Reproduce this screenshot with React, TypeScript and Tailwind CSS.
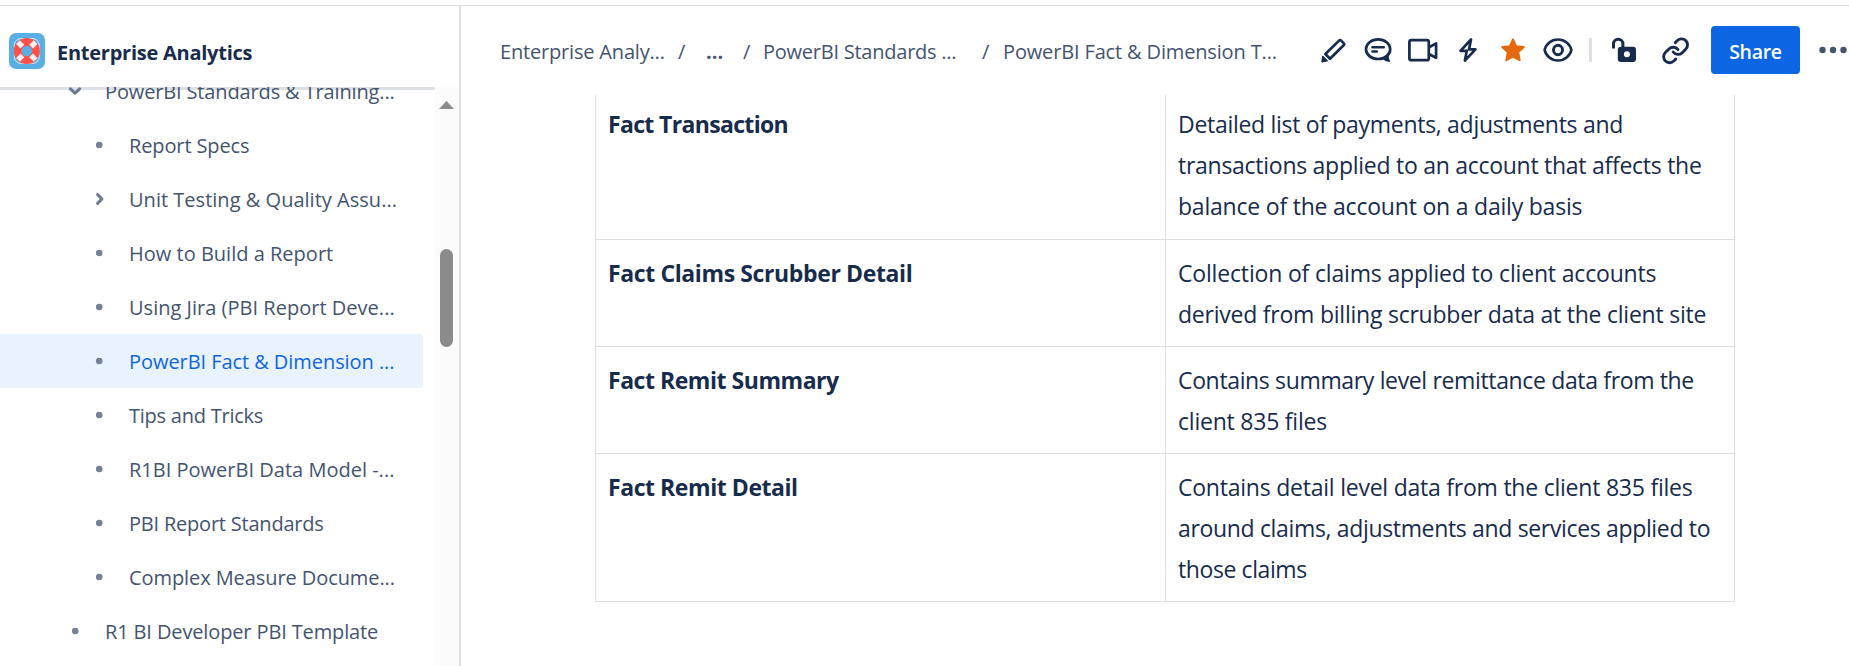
import type { ReactNode } from "react";

type TreeItem = {
  label: string;
  tracking: string;
  kind?: "bullet" | "open" | "closed";
  outer?: boolean;
  active?: boolean;
};

const tree: TreeItem[] = [
  { label: "PowerBI Standards & Training...", tracking: "tracking-[-0.14px]", kind: "open", outer: true },
  { label: "Report Specs", tracking: "tracking-[-0.12px]" },
  { label: "Unit Testing & Quality Assu...", tracking: "tracking-[0.02px]", kind: "closed" },
  { label: "How to Build a Report", tracking: "tracking-[0.01px]" },
  { label: "Using Jira (PBI Report Deve...", tracking: "tracking-[0.02px]" },
  { label: "PowerBI Fact & Dimension ...", tracking: "tracking-[-0.06px]", active: true },
  { label: "Tips and Tricks", tracking: "tracking-[-0.24px]" },
  { label: "R1BI PowerBI Data Model -...", tracking: "tracking-[0.01px]" },
  { label: "PBI Report Standards", tracking: "tracking-[-0.21px]" },
  { label: "Complex Measure Docume...", tracking: "tracking-[-0.08px]" },
  { label: "R1 BI Developer PBI Template", tracking: "tracking-[-0.13px]", outer: true },
];

type Line = [text: string, tracking: string];
type Row = { name: Line; lines: Line[]; cell: string };

const rows: Row[] = [
  {
    name: ["Fact Transaction", "tracking-[-0.66px]"],
    cell: "h-[144px] pt-[8.8px]",
    lines: [
      ["Detailed list of payments, adjustments and", "tracking-[-0.3px]"],
      ["transactions applied to an account that affects the", "tracking-[-0.27px]"],
      ["balance of the account on a daily basis", "tracking-[-0.21px]"],
    ],
  },
  {
    name: ["Fact Claims Scrubber Detail", "tracking-[-0.38px]"],
    cell: "h-[106px] pt-[13px]",
    lines: [
      ["Collection of claims applied to client accounts", "tracking-[-0.17px]"],
      ["derived from billing scrubber data at the client site", "tracking-[-0.23px]"],
    ],
  },
  {
    name: ["Fact Remit Summary", "tracking-[-0.46px]"],
    cell: "h-[106px] pt-[13px]",
    lines: [
      ["Contains summary level remittance data from the", "tracking-[-0.35px]"],
      ["client 835 files", "tracking-[-0.22px]"],
    ],
  },
  {
    name: ["Fact Remit Detail", "tracking-[-0.44px]"],
    cell: "h-[147px] pt-[13px]",
    lines: [
      ["Contains detail level data from the client 835 files", "tracking-[-0.23px]"],
      ["around claims, adjustments and services applied to", "tracking-[-0.34px]"],
      ["those claims", "tracking-[-0.41px]"],
    ],
  },
];

function LifeRing() {
  return (
    <svg viewBox="0 0 36 36" className="size-9 shrink-0">
      <rect width="36" height="36" rx="7" fill="#59afe1" />
      <rect x="5.4" y="5.6" width="24.8" height="24.8" rx="6.5" fill="none" stroke="#d5ecf8" strokeWidth="1" />
      <circle cx="17.8" cy="18" r="9.2" fill="none" stroke="#ff5149" strokeWidth="7.8" />
      <g fill="none" stroke="#fbeff0" strokeWidth="5.4">
        <path d="M13.4 13.6 9 9.2M22.2 13.6 26.6 9.2M13.4 22.4 9 26.8M22.2 22.4 26.6 26.8" />
      </g>
    </svg>
  );
}

function Icon({ children, label, className = "text-[#172b4d]" }: { children: ReactNode; label: string; className?: string }) {
  return (
    <button aria-label={label} className={`size-9 shrink-0 ${className}`}>
      <svg viewBox="0 0 36 36" className="size-9" fill="none" stroke="currentColor" strokeWidth="2.7" strokeLinecap="round" strokeLinejoin="round">
        {children}
      </svg>
    </button>
  );
}

function Marker({ kind = "bullet" }: { kind?: TreeItem["kind"] }) {
  return (
    <svg viewBox="0 0 24 24" className="size-6 shrink-0" fill="none" stroke="#6b7a92" strokeWidth="3" strokeLinecap="round" strokeLinejoin="round">
      {kind === "bullet" && <circle cx="12.2" cy="12" r="3.3" fill="#758195" stroke="none" />}
      {kind === "open" && <path d="m7.4 9.8 4.6 4.4 4.6-4.4" />}
      {kind === "closed" && <path d="m10.6 7.6 4.3 4.4-4.3 4.4" />}
    </svg>
  );
}

function Sidebar() {
  return (
    <aside className="flex w-[461px] shrink-0 flex-col border-r-2 border-[#dcdfe4]">
      <div className="flex h-[81px] shrink-0 items-center gap-3 pt-[9px] pl-[9px]">
        <LifeRing />
        <h1 className="pt-[3px] text-[20px] font-bold tracking-[-0.25px] text-[#172b4d]">Enterprise Analytics</h1>
      </div>
      <div className="flex min-h-0 flex-1">
        <nav className="relative w-[435px] overflow-hidden">
          <div className="absolute inset-x-0 top-0 h-[3px] rounded-r-sm bg-[#dcdfe4]" />
          <ul className="relative -mt-[23px]">
            {tree.map((item) => (
              <li
                key={item.label}
                className={`flex h-[54px] w-[423px] items-center gap-[18px] rounded-r ${item.outer ? "pl-[63px]" : "pl-[87px]"} ${
                  item.active ? "bg-[#e9f2ff] text-[#0c66e4]" : "text-[#44546f]"
                }`}
              >
                <Marker kind={item.kind} />
                <span className={`pt-[2px] text-[20px] whitespace-nowrap ${item.tracking}`}>{item.label}</span>
              </li>
            ))}
          </ul>
        </nav>
        <div className="flex w-6 flex-col items-center bg-[#fbfbfb] pt-[14px] pr-[1px]">
          <svg viewBox="0 0 15 8" className="h-2 w-[15px] shrink-0" fill="#8b8b8b">
            <path d="M7.5 0 15 8H0Z" />
          </svg>
          <div className="mt-[140px] h-[98px] w-[13px] shrink-0 rounded-full bg-[#8b8b8b]" />
        </div>
      </div>
    </aside>
  );
}

function Toolbar() {
  return (
    <div className="ml-auto flex w-[534px] shrink-0 items-center">
      <div className="flex gap-[9px]">
        <Icon label="Edit">
          <path d="M24.3 8.4q.8-.8 1.6 0l3 3q.8.8 0 1.6L15 26.7 10.4 22Z" />
          <path d="m7.8 24.6 4.3 4.2-5 .9Z" fill="currentColor" strokeWidth="1.6" />
        </Icon>
        <Icon label="Comments">
          <ellipse cx="18.1" cy="17.2" rx="12.1" ry="9.8" />
          <path d="M29.3 29.2c-2.5 0-4.2-.6-5.6-2.4l4.4-3.1c-.3 2 0 3.7 1.2 5.5Z" fill="currentColor" strokeWidth="1.4" />
          <path d="M12.4 15.2h11.4M12.4 19.4h4.4" strokeWidth="2.5" />
        </Icon>
        <Icon label="Record">
          <rect x="4.4" y="8.2" width="19.4" height="20" rx="2" />
          <path d="m24.2 15.2 6.9-3.8v14.4l-6.9-3.6" />
        </Icon>
        <Icon label="Automation">
          <path d="m21 7.5-2 9.9h6.4L14.9 28.6l1.9-9.8h-6.3Z" />
        </Icon>
        <Icon label="Starred" className="text-[#e56910]">
          <path
            d="m18 7.3 3.1 6.9 7.7.8-5.6 5.3 1.5 7.9L18 24.7l-6.7 3.5 1.5-7.9L7.2 15l7.7-.8Z"
            fill="currentColor"
            strokeWidth="2"
          />
        </Icon>
        <Icon label="Watch">
          <path d="M4.6 18C6 12 11.4 7.5 18 7.5S30 12 31.4 18C30 24 24.6 28.5 18 28.5S6 24 4.6 18Z" />
          <ellipse cx="18" cy="18" rx="4.5" ry="4.7" strokeWidth="3" />
        </Icon>
      </div>
      <div className="ml-[13px] h-6 w-[3px] shrink-0 bg-[#dcdfe4]" />
      <Icon label="Restrictions" className="ml-[14px] text-[#172b4d]">
        <path d="M7.5 16.5V12a4.7 4.7 0 0 1 9.4 0v3.5" strokeLinecap="butt" strokeWidth="3" />
        <rect x="11.8" y="14.8" width="18.2" height="15.2" rx="3" fill="currentColor" stroke="none" />
        <circle cx="20.9" cy="22.3" r="3" fill="#fff" stroke="none" />
      </Icon>
      <Icon label="Copy link" className="ml-4 text-[#172b4d]">
        <g transform="translate(3.2 4.4) scale(1.2)" strokeWidth="2.4">
          <path d="M10 13a5 5 0 0 0 7.54.54l3-3a5 5 0 0 0-7.07-7.07l-1.72 1.71" />
          <path d="M14 11a5 5 0 0 0-7.54-.54l-3 3a5 5 0 0 0 7.07 7.07l1.71-1.71" />
        </g>
      </Icon>
      <button className="ml-[17px] h-12 w-[89px] shrink-0 rounded-[4px] bg-[#0c66e4] pt-[3px] text-[19.5px] font-semibold tracking-[-0.3px] text-white">
        Share
      </button>
      <button aria-label="More" className="ml-[15px] shrink-0">
        <svg viewBox="0 0 34 36" className="h-9 w-[34px]" fill="#44546f">
          <circle cx="7.5" cy="18" r="3.2" />
          <circle cx="18" cy="18" r="3.2" />
          <circle cx="28.5" cy="18" r="3.2" />
        </svg>
      </button>
    </div>
  );
}

export default function App() {
  return (
    <div className="flex h-[666px] w-[1849px] flex-col overflow-hidden bg-white font-['Open_Sans',sans-serif] text-[#172b4d]">
      <div className="h-[6px] shrink-0 border-b border-[#dcdfe4]" />
      <div className="flex min-h-0 flex-1">
        <Sidebar />
        <main className="flex min-w-0 flex-1 flex-col">
          <header className="flex h-[89px] shrink-0 items-center pb-px pl-[39px]">
            <nav className="flex pt-[3px] text-[20px] whitespace-nowrap text-[#44546f]">
              <span className="w-[178px] tracking-[-0.18px]">Enterprise Analy...</span>
              <span className="w-[28px]">/</span>
              <span className="w-[37px] font-bold">...</span>
              <span className="w-[20px]">/</span>
              <span className="w-[219px] tracking-[-0.24px]">PowerBI Standards ...</span>
              <span className="w-[21px]">/</span>
              <span className="tracking-[-0.15px]">PowerBI Fact &amp; Dimension T...</span>
            </nav>
            <Toolbar />
          </header>
          <div className="ml-[134px] w-[1140px] text-[23px] leading-[41.14px] whitespace-nowrap">
            {rows.map((row) => (
              <div key={row.name[0]} className="grid grid-cols-2 border-x border-b border-[#dcdfe4]">
                <div className={`pl-3 font-bold ${row.cell} ${row.name[1]}`}>{row.name[0]}</div>
                <div className={`border-l border-[#dcdfe4] pl-3 ${row.cell}`}>
                  {row.lines.map(([text, tracking]) => (
                    <p key={text} className={tracking}>
                      {text}
                    </p>
                  ))}
                </div>
              </div>
            ))}
          </div>
        </main>
      </div>
    </div>
  );
}
